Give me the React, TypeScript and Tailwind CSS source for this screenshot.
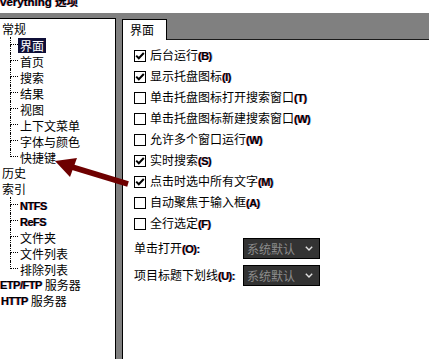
import React from "react";

const cjk = { fontFamily: '"Noto Sans CJK SC", "Noto Sans", sans-serif' };
const latin = { fontFamily: '"Liberation Sans", Arial, sans-serif' };

// bold latin bits (hotkeys, NTFS...) carry a little colour fringe like the screenshot
function Key({ children }: { children: React.ReactNode }) {
    return (
        <span
            style={latin}
            className="font-bold text-[11px] tracking-[-0.5px] text-black [text-shadow:-0.6px_0_rgba(255,0,0,0.5),0.6px_0_rgba(0,140,255,0.5)]"
        >
            {children}
        </span>
    );
}

type Child = { label: React.ReactNode; selected?: boolean };

function TopRow({ children }: { children: React.ReactNode }) {
    return <div className="h-4 flex items-center pl-[2px] whitespace-nowrap">{children}</div>;
}

function ChildRow({ item, last }: { item: Child; last: boolean }) {
    return (
        <div className="h-4 flex items-stretch whitespace-nowrap">
            <div className="w-[10px] shrink-0" />
            <div className="w-[8px] shrink-0 flex flex-col">
                <div className="h-[8px] border-l border-b border-dotted border-black" />
                <div className={"h-[8px] " + (last ? "" : "border-l border-dotted border-black")} />
            </div>
            <div className="flex items-center">
                <span
                    className={
                        "px-[2px] leading-[15px] " + (item.selected ? "bg-[#0f0f38] text-white" : "text-black")
                    }
                >
                    {item.label}
                </span>
            </div>
        </div>
    );
}

function Group({ items }: { items: Child[] }) {
    return (
        <div>
            {items.map((it, i) => (
                <ChildRow key={i} item={it} last={i === items.length - 1} />
            ))}
        </div>
    );
}

const general: Child[] = [
    { label: "界面", selected: true },
    { label: "首页" },
    { label: "搜索" },
    { label: "结果" },
    { label: "视图" },
    { label: "上下文菜单" },
    { label: "字体与颜色" },
    { label: "快捷键" },
];

const index: Child[] = [
    { label: <Key>NTFS</Key> },
    { label: <Key>ReFS</Key> },
    { label: "文件夹" },
    { label: "文件列表" },
    { label: "排除列表" },
];

const options = [
    { text: "后台运行", key: "(B)", on: true },
    { text: "显示托盘图标", key: "(I)", on: true },
    { text: "单击托盘图标打开搜索窗口", key: "(T)", on: false },
    { text: "单击托盘图标新建搜索窗口", key: "(W)", on: false },
    { text: "允许多个窗口运行", key: "(W)", on: false },
    { text: "实时搜索", key: "(S)", on: true },
    { text: "点击时选中所有文字", key: "(M)", on: true },
    { text: "自动聚焦于输入框", key: "(A)", on: false },
    { text: "全行选定", key: "(F)", on: false },
];

function Checkbox({ on }: { on: boolean }) {
    return (
        <div className="w-[12px] h-[12px] border border-black bg-white shrink-0 flex items-center justify-center">
            {on && (
                <svg width="10" height="10" viewBox="0 0 10 10">
                    <path d="M1.2 4.6 L3.8 7.2 L8.8 2" fill="none" stroke="#000" strokeWidth="2" />
                </svg>
            )}
        </div>
    );
}

function Select() {
    return (
        <div className="w-[77px] h-[21px] bg-[#333333] border border-black flex items-center justify-between pl-[3px] pr-[6px]">
            <span className="text-[12px] text-[#8c8c8c] leading-none">系统默认</span>
            <svg width="8" height="5" viewBox="0 0 8 5">
                <path d="M0.8 0.8 L4 4 L7.2 0.8" fill="none" stroke="#e0e0e0" strokeWidth="1.4" />
            </svg>
        </div>
    );
}

export default function App() {
    return (
        <div style={cjk} className="relative w-[429px] h-[359px] overflow-hidden bg-[#808080] text-[12px] text-black">
            {/* window title, mostly cut off at the top */}
            <div className="h-[13px] bg-white overflow-hidden">
                <div style={latin} className="-mt-[5.5px] leading-[12px] text-[11.5px] font-bold whitespace-nowrap [text-shadow:-0.6px_0_rgba(255,0,0,0.5),0.6px_0_rgba(0,140,255,0.5)]">
                    verything <span style={cjk} className="font-bold">选项</span>
                </div>
            </div>

            <div className="flex h-[346px]">
                {/* tree */}
                <div className="mt-[5px] w-[116px] shrink-0 bg-white border-t border-r border-black pt-[2px] overflow-hidden">
                    <TopRow>常规</TopRow>
                    <Group items={general} />
                    <TopRow>历史</TopRow>
                    <TopRow>索引</TopRow>
                    <Group items={index} />
                    <div className="h-4 flex items-center whitespace-nowrap">
                        <Key>ETP/FTP</Key>
                        <span className="ml-[3px]">服务器</span>
                    </div>
                    <div className="h-4 flex items-center pl-[1px] whitespace-nowrap">
                        <Key>HTTP</Key>
                        <span className="ml-[3px]">服务器</span>
                    </div>
                </div>

                <div className="w-[6px] shrink-0" />

                {/* settings page */}
                <div className="flex-1 flex flex-col">
                    <div className="h-[27px] flex items-end">
                        <div className="h-[21px] w-[45px] bg-white border-t border-l border-r border-black pl-[7px] flex items-center">
                            界面
                        </div>
                        <div className="flex-1 h-full border-b border-[#1a1a1a]" />
                    </div>
                    <div className="flex-1 bg-white border-l border-black pl-[11px] pt-[5px]">
                        {options.map((o, i) => (
                            <div key={i} className="h-[21px] flex items-center gap-[4px] whitespace-nowrap">
                                <Checkbox on={o.on} />
                                <span>
                                    {o.text}
                                    <Key>{o.key}</Key>
                                </span>
                            </div>
                        ))}
                        <div className="mt-[4px] flex flex-col gap-[6px]">
                            <div className="flex items-center">
                                <span className="w-[109px] whitespace-nowrap">
                                    单击打开<Key>(O):</Key>
                                </span>
                                <Select />
                            </div>
                            <div className="flex items-center">
                                <span className="w-[109px] whitespace-nowrap">
                                    项目标题下划线<Key>(U):</Key>
                                </span>
                                <Select />
                            </div>
                        </div>
                    </div>
                </div>
            </div>

            {/* red annotation arrow pointing at 快捷键 */}
            <svg className="absolute left-0 top-0 pointer-events-none" width="429" height="359">
                <line x1="128" y1="184" x2="72" y2="167" stroke="#6e0000" strokeWidth="5.5" />
                <polygon points="55,161 77,158 70,177" fill="#6e0000" />
            </svg>
        </div>
    );
}
